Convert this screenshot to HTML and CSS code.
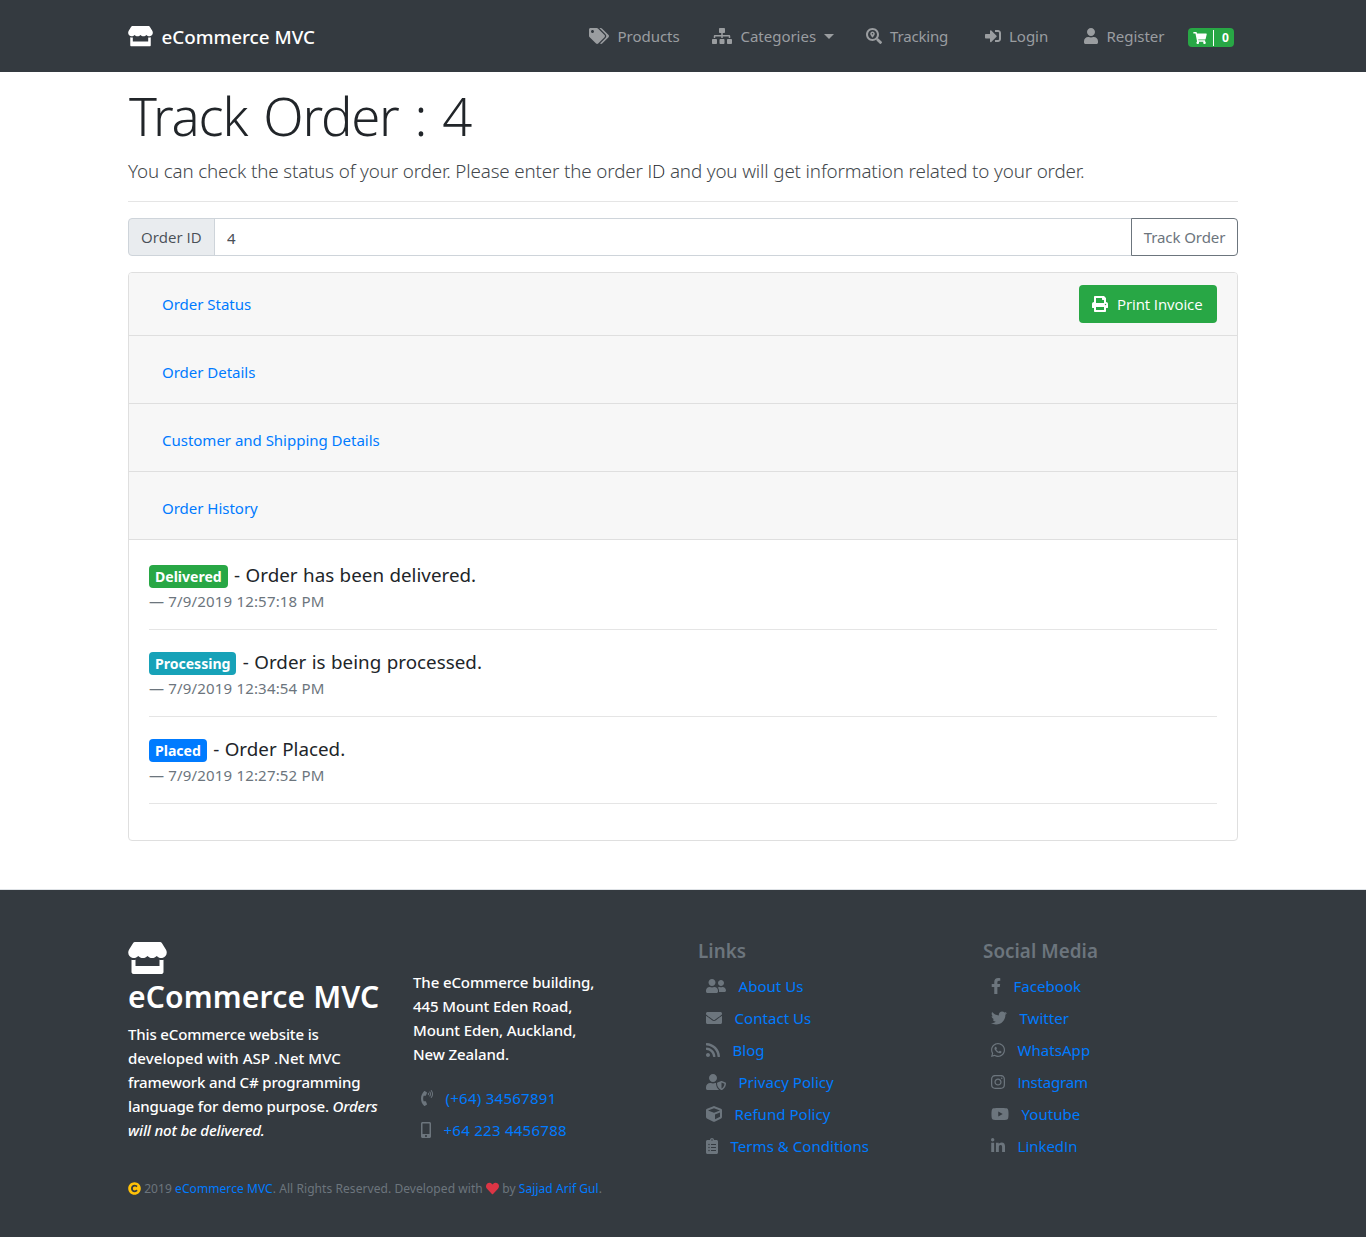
FILE: index.html
```html
<!DOCTYPE html>
<html lang="en">
<head>
<meta charset="utf-8">
<title>Track Order - eCommerce MVC</title>
<link rel="stylesheet" href="styles.css">
</head>
<body>
<svg class="sprite" aria-hidden="true">
  <symbol id="store" viewBox="0 0 616 512"><path d="M602 118.6L537.1 15C531.3 5.7 521 0 510 0H106C95 0 84.7 5.7 78.9 15L14 118.6c-33.5 53.5-3.8 127.9 58.8 136.4 4.5.6 9.1.9 13.7.9 29.6 0 55.8-13 73.8-33.1 18 20.1 44.3 33.1 73.8 33.1 29.6 0 55.8-13 73.8-33.1 18 20.1 44.3 33.1 73.8 33.1 29.6 0 55.8-13 73.8-33.1 18.1 20.1 44.3 33.1 73.8 33.1 4.7 0 9.2-.3 13.7-.9 62.8-8.4 92.6-82.8 59-136.4zM529.5 288c-10 0-19.9-1.5-29.5-3.8V384H116v-99.8c-9.6 2.2-19.5 3.8-29.5 3.8-6 0-12.1-.4-18-1.2-5.6-.8-11.1-2.1-16.4-3.6V480c0 17.7 14.3 32 32 32h448c17.7 0 32-14.3 32-32V283.2c-5.4 1.6-10.8 2.9-16.4 3.6-6.1.8-12.1 1.2-18.2 1.2z"/></symbol>
  <symbol id="tags" viewBox="0 0 640 512"><path d="M497.941 225.941L286.059 14.059A48 48 0 0 0 252.118 0H48C21.49 0 0 21.49 0 48v204.118a48 48 0 0 0 14.059 33.941l211.882 211.882c18.744 18.745 49.136 18.746 67.882 0l204.118-204.118c18.745-18.745 18.745-49.137 0-67.882zM112 160c-26.51 0-48-21.49-48-48s21.49-48 48-48 48 21.49 48 48-21.49 48-48 48zm513.941 133.823L421.823 497.941c-18.745 18.745-49.137 18.745-67.882 0l-.36-.36L527.64 323.522c16.999-16.999 26.36-39.6 26.36-63.64s-9.362-46.641-26.36-63.64L331.397 0h48.721a48 48 0 0 1 33.941 14.059l211.882 211.882c18.745 18.745 18.745 49.137 0 67.882z"/></symbol>
  <symbol id="sitemap" viewBox="0 0 640 512"><path d="M128 352H32c-17.67 0-32 14.33-32 32v96c0 17.67 14.33 32 32 32h96c17.67 0 32-14.33 32-32v-96c0-17.67-14.33-32-32-32zm-24-80h192v48h48v-48h192v48h48v-57.59c0-21.17-17.23-38.41-38.41-38.41H344v-64h40c17.67 0 32-14.33 32-32V32c0-17.67-14.33-32-32-32H256c-17.67 0-32 14.33-32 32v96c0 17.67 14.33 32 32 32h40v64H94.41C73.23 224 56 241.23 56 262.41V320h48v-48zm264 80h-96c-17.67 0-32 14.33-32 32v96c0 17.67 14.33 32 32 32h96c17.67 0 32-14.33 32-32v-96c0-17.67-14.33-32-32-32zm240 0h-96c-17.67 0-32 14.33-32 32v96c0 17.67 14.33 32 32 32h96c17.67 0 32-14.33 32-32v-96c0-17.67-14.33-32-32-32z"/></symbol>
  <symbol id="search-location" viewBox="0 0 512 512"><path d="M505.04 442.66l-99.71-99.69c-4.5-4.5-10.6-7-17-7h-16.3c27.6-35.3 44-79.69 44-127.99C416.03 93.09 322.92 0 208.02 0S0 93.09 0 207.98s93.11 207.98 208.02 207.98c48.3 0 92.71-16.4 128.01-44v16.3c0 6.4 2.5 12.5 7 17l99.71 99.69c9.4 9.4 24.6 9.4 33.9 0l28.3-28.3c9.4-9.4 9.4-24.59.1-33.99zm-297.02-90.7c-79.54 0-144-64.34-144-143.98 0-79.53 64.35-143.98 144-143.98 79.54 0 144 64.34 144 143.98 0 79.53-64.35 143.98-144 143.98zm.02-239.96c-40.78 0-73.84 33.05-73.84 73.83 0 32.96 48.26 93.05 66.75 114.86a9.24 9.24 0 0 0 14.18 0c18.49-21.81 66.75-81.89 66.75-114.86 0-40.78-33.06-73.83-73.84-73.83zm0 96c-13.26 0-24-10.75-24-24 0-13.26 10.75-24 24-24s24 10.74 24 24c0 13.25-10.75 24-24 24z"/></symbol>
  <symbol id="sign-in" viewBox="0 0 512 512"><path d="M416 448h-84c-6.6 0-12-5.4-12-12v-40c0-6.6 5.4-12 12-12h84c17.7 0 32-14.3 32-32V160c0-17.7-14.3-32-32-32h-84c-6.6 0-12-5.4-12-12V76c0-6.6 5.4-12 12-12h84c53 0 96 43 96 96v192c0 53-43 96-96 96zm-47-201L201 79c-15-15-41-4.5-41 17v96H24c-13.3 0-24 10.7-24 24v96c0 13.3 10.7 24 24 24h136v96c0 21.5 26 32 41 17l168-168c9.3-9.4 9.3-24.6 0-34z"/></symbol>
  <symbol id="user" viewBox="0 0 448 512"><path d="M224 256c70.7 0 128-57.3 128-128S294.7 0 224 0 96 57.3 96 128s57.3 128 128 128zm89.6 32h-16.7c-22.2 10.2-46.9 16-72.9 16s-50.6-5.8-72.9-16h-16.7C60.2 288 0 348.2 0 422.4V464c0 26.5 21.5 48 48 48h352c26.5 0 48-21.5 48-48v-41.6c0-74.2-60.2-134.4-134.4-134.4z"/></symbol>
  <symbol id="cart" viewBox="0 0 576 512"><path d="M528.12 301.319l47.273-208C578.806 78.301 567.391 64 551.99 64H159.208l-9.166-44.81C147.758 8.021 137.93 0 126.529 0H24C10.745 0 0 10.745 0 24v16c0 13.255 10.745 24 24 24h69.883l70.248 343.435C147.325 417.1 136 435.222 136 456c0 30.928 25.072 56 56 56s56-25.072 56-56c0-15.674-6.447-29.835-16.824-40h209.647C430.447 426.165 424 440.326 424 456c0 30.928 25.072 56 56 56s56-25.072 56-56c0-22.172-12.888-41.332-31.579-50.405l5.517-24.276c3.413-15.018-8.002-29.319-23.403-29.319H218.117l-6.545-32h293.145c11.206 0 20.92-7.754 23.403-18.681z"/></symbol>
  <symbol id="print" viewBox="0 0 512 512"><path d="M448 192V77.25c0-8.49-3.37-16.62-9.37-22.63L393.37 9.37c-6-6-14.14-9.37-22.63-9.37H96C78.33 0 64 14.33 64 32v160c-35.35 0-64 28.65-64 64v112c0 8.84 7.16 16 16 16h48v96c0 17.67 14.33 32 32 32h320c17.67 0 32-14.33 32-32v-96h48c8.84 0 16-7.16 16-16V256c0-35.35-28.65-64-64-64zm-64 256H128v-96h256v96zm0-224H128V64h192v48c0 8.84 7.16 16 16 16h48v96zm48 72c-13.25 0-24-10.75-24-24 0-13.26 10.75-24 24-24s24 10.74 24 24c0 13.25-10.75 24-24 24z"/></symbol>
  <symbol id="copyright" viewBox="0 0 512 512"><path d="M256 8C119.033 8 8 119.033 8 256s111.033 248 248 248 248-111.033 248-248S392.967 8 256 8zm117.134 346.753c-1.592 1.867-39.776 45.731-109.851 45.731-84.692 0-144.484-63.26-144.484-145.567 0-81.303 62.004-143.401 143.762-143.401 66.957 0 101.965 37.315 103.422 38.904a12 12 0 0 1 1.238 14.623l-22.38 34.655c-4.049 6.267-12.774 7.351-18.234 2.295-.233-.214-26.529-23.88-61.88-23.88-46.116 0-73.916 33.575-73.916 76.082 0 39.602 25.514 79.692 74.277 79.692 38.697 0 65.28-28.338 65.544-28.625 5.132-5.565 14.059-5.033 18.508 1.053l24.547 33.572a12.001 12.001 0 0 1-.553 14.866z"/></symbol>
  <symbol id="heart" viewBox="0 0 512 512"><path d="M462.3 62.6C407.5 15.9 326 24.3 275.7 76.2L256 96.5l-19.7-20.3C186.1 24.3 104.5 15.9 49.7 62.6c-62.8 53.6-66.1 149.8-9.9 207.9l193.5 199.8c12.5 12.9 32.8 12.9 45.3 0l193.5-199.8c56.3-58.1 53-154.3-9.8-207.9z"/></symbol>
  <symbol id="phone" viewBox="0 0 384 512"><path d="M97.333 506.966c-129.874-129.874-129.681-340.252 0-469.933 5.698-5.698 14.527-6.632 21.263-2.422l64.817 40.513a17.187 17.187 0 0 1 6.849 20.958l-32.408 81.021a17.188 17.188 0 0 1-17.669 10.719l-55.81-5.58c-21.051 58.261-20.612 122.471 0 179.515l55.811-5.581a17.188 17.188 0 0 1 17.669 10.719l32.408 81.022a17.188 17.188 0 0 1-6.849 20.958l-64.817 40.513a17.19 17.19 0 0 1-21.265-2.422zM247.126 95.473c11.832 20.047 11.832 45.008 0 65.055-3.95 6.693-13.108 7.959-18.718 2.581l-5.975-5.726c-3.911-3.748-4.793-9.622-2.261-14.41a32.063 32.063 0 0 0 0-29.945c-2.533-4.788-1.65-10.662 2.261-14.41l5.975-5.726c5.61-5.378 14.768-4.112 18.718 2.581zm91.787-91.187c60.14 71.604 60.092 175.882 0 247.428-4.474 5.327-12.53 5.746-17.552.933l-5.798-5.557c-4.56-4.371-4.977-11.529-.93-16.379 49.687-59.538 49.646-145.933 0-205.422-4.047-4.85-3.631-12.008.93-16.379l5.798-5.557c5.022-4.813 13.078-4.394 17.552.933zm-45.972 44.941c36.05 46.322 36.108 111.149 0 157.546-4.39 5.641-12.697 6.251-17.856 1.304l-5.818-5.579c-4.4-4.219-4.998-11.095-1.285-15.931 26.536-34.564 26.534-82.572 0-117.134-3.713-4.836-3.115-11.711 1.285-15.931l5.818-5.579c5.159-4.947 13.466-4.337 17.856 1.304z"/></symbol>
  <symbol id="mobile" viewBox="0 0 320 512"><path d="M272 0H48C21.5 0 0 21.5 0 48v416c0 26.5 21.5 48 48 48h224c26.5 0 48-21.5 48-48V48c0-26.5-21.5-48-48-48zM160 480c-17.7 0-32-14.3-32-32s14.3-32 32-32 32 14.3 32 32-14.3 32-32 32zm112-108c0 6.6-5.4 12-12 12H60c-6.6 0-12-5.4-12-12V60c0-6.6 5.4-12 12-12h200c6.6 0 12 5.4 12 12v312z"/></symbol>
  <symbol id="users" viewBox="0 0 640 512"><path d="M192 256c61.9 0 112-50.1 112-112S253.9 32 192 32 80 82.1 80 144s50.1 112 112 112zm76.8 32h-8.3c-20.8 10-43.9 16-68.5 16s-47.6-6-68.5-16h-8.3C51.6 288 0 339.6 0 403.2V432c0 26.5 21.5 48 48 48h288c26.5 0 48-21.5 48-48v-28.8c0-63.6-51.6-115.2-115.2-115.2zM480 256c53 0 96-43 96-96s-43-96-96-96-96 43-96 96 43 96 96 96zm48 32h-3.8c-13.9 4.8-28.6 8-44.2 8s-30.3-3.2-44.2-8H432c-20.4 0-39.2 5.9-55.7 15.4 24.4 26.3 39.7 61.2 39.7 99.8v38.4c0 2.2-.5 4.3-.6 6.4H592c26.5 0 48-21.5 48-48 0-61.9-50.1-112-112-112z"/></symbol>
  <symbol id="envelope" viewBox="0 0 512 512"><path d="M502.3 190.8c3.9-3.1 9.7-.2 9.7 4.7V400c0 26.5-21.5 48-48 48H48c-26.5 0-48-21.5-48-48V195.6c0-5 5.7-7.8 9.7-4.7 22.4 17.4 52.1 39.5 154.1 113.6 21.1 15.4 56.7 47.8 92.2 47.6 35.7.3 72-32.8 92.3-47.6 102-74.1 131.6-96.3 154-113.7zM256 320c23.2.4 56.6-29.2 73.4-41.4 132.7-96.3 142.8-104.7 173.4-128.7 5.8-4.5 9.2-11.5 9.2-18.9v-19c0-26.5-21.5-48-48-48H48c-26.5 0-48 21.5-48 48v19c0 7.4 3.4 14.3 9.2 18.9 30.6 23.9 40.7 32.4 173.4 128.7 16.8 12.2 50.2 41.8 73.4 41.4z"/></symbol>
  <symbol id="rss" viewBox="0 0 448 512"><path d="M128.081 415.959c0 35.369-28.672 64.041-64.041 64.041S0 451.328 0 415.959s28.672-64.041 64.041-64.041 64.04 28.673 64.04 64.041zm175.66 47.25c-8.354-154.6-132.185-278.587-286.95-286.95C7.656 175.765 0 183.105 0 192.253v48.069c0 8.415 6.49 15.472 14.887 16.018 111.832 7.284 201.473 96.702 208.772 208.772.547 8.397 7.604 14.887 16.018 14.887h48.069c9.149.001 16.489-7.655 15.995-16.79zm144.249.288C439.596 229.677 251.465 40.445 16.503 32.01 7.473 31.686 0 38.981 0 48.016v48.068c0 8.625 6.835 15.645 15.453 15.999 191.179 7.839 344.627 161.316 352.465 352.465.353 8.618 7.373 15.453 15.999 15.453h48.068c9.034-.001 16.329-7.474 16.005-16.504z"/></symbol>
  <symbol id="user-shield" viewBox="0 0 640 512"><path d="M622.3 271.1l-115.2-45c-4.1-1.6-12.6-3.7-22.2 0l-115.2 45c-10.7 4.2-17.7 14-17.7 24.9 0 111.6 68.7 188.8 132.9 213.9 9.6 3.7 18 1.6 22.2 0C558.4 489.9 640 420.5 640 296c0-10.9-7-20.7-17.7-24.9zM496 462.4V273.3l95.5 37.3c-5.6 87.1-60.9 135.4-95.5 151.8zM224 256c70.7 0 128-57.3 128-128S294.7 0 224 0 96 57.3 96 128s57.3 128 128 128zm96 40c0-2.5.8-4.8 1.1-7.2-2.5-.1-4.9-.8-7.5-.8h-16.7c-22.2 10.2-46.9 16-72.9 16s-50.6-5.8-72.9-16h-16.7C60.2 288 0 348.2 0 422.4V464c0 26.5 21.5 48 48 48h352c6.8 0 13.3-1.5 19.2-4-54-42.9-99.2-116.7-99.2-212z"/></symbol>
  <symbol id="cube" viewBox="0 0 512 512"><path d="M239.1 6.3l-208 78c-18.7 7-31.1 25-31.1 45v225.1c0 18.2 10.3 34.8 26.5 42.9l208 104c13.5 6.8 29.4 6.8 42.9 0l208-104c16.3-8.1 26.5-24.8 26.5-42.9V129.3c0-20-12.4-37.9-31.1-44.9l-208-78C262 2.2 250 2.2 239.1 6.3zM256 68.4l192 72v1.1l-192 78-192-78v-1.1l192-72zm32 356V275.5l160-65v133.9l-160 80z"/></symbol>
  <symbol id="clipboard" viewBox="0 0 384 512"><path d="M336 64h-80c0-35.3-28.7-64-64-64s-64 28.7-64 64H48C21.5 64 0 85.5 0 112v352c0 26.5 21.5 48 48 48h288c26.5 0 48-21.5 48-48V112c0-26.5-21.5-48-48-48zM96 424c-13.3 0-24-10.7-24-24s10.7-24 24-24 24 10.7 24 24-10.7 24-24 24zm0-96c-13.3 0-24-10.7-24-24s10.7-24 24-24 24 10.7 24 24-10.7 24-24 24zm0-96c-13.3 0-24-10.7-24-24s10.7-24 24-24 24 10.7 24 24-10.7 24-24 24zm96-192c13.3 0 24 10.7 24 24s-10.7 24-24 24-24-10.7-24-24 10.7-24 24-24zm128 368c0 4.4-3.6 8-8 8H168c-4.4 0-8-3.6-8-8v-16c0-4.4 3.6-8 8-8h144c4.4 0 8 3.6 8 8v16zm0-96c0 4.4-3.6 8-8 8H168c-4.4 0-8-3.6-8-8v-16c0-4.4 3.6-8 8-8h144c4.4 0 8 3.6 8 8v16zm0-96c0 4.4-3.6 8-8 8H168c-4.4 0-8-3.6-8-8v-16c0-4.4 3.6-8 8-8h144c4.4 0 8 3.6 8 8v16z"/></symbol>
  <symbol id="facebook" viewBox="0 0 320 512"><path d="M279.14 288l14.22-92.66h-88.91v-60.13c0-25.35 12.42-50.06 52.24-50.06h40.42V6.26S260.43 0 225.36 0c-73.22 0-121.08 44.38-121.08 124.72v70.62H22.89V288h81.39v224h100.17V288z"/></symbol>
  <symbol id="twitter" viewBox="0 0 512 512"><path d="M459.37 151.716c.325 4.548.325 9.097.325 13.645 0 138.72-105.583 298.558-298.558 298.558-59.452 0-114.68-17.219-161.137-47.106 8.447.974 16.568 1.299 25.34 1.299 49.055 0 94.213-16.568 130.274-44.832-46.132-.975-84.792-31.188-98.112-72.772 6.498.974 12.995 1.624 19.818 1.624 9.421 0 18.843-1.3 27.614-3.573-48.081-9.747-84.143-51.98-84.143-102.985v-1.299c13.969 7.797 30.214 12.67 47.431 13.319-28.264-18.843-46.781-51.005-46.781-87.391 0-19.492 5.197-37.36 14.294-52.954 51.655 63.675 129.3 105.258 216.365 109.807-1.624-7.797-2.599-15.918-2.599-24.04 0-57.828 46.782-104.934 104.934-104.934 30.213 0 57.502 12.67 76.67 33.137 23.715-4.548 46.456-13.32 66.599-25.34-7.798 24.366-24.366 44.833-46.132 57.827 21.117-2.273 41.584-8.122 60.426-16.243-14.292 20.791-32.161 39.308-52.628 54.253z"/></symbol>
  <symbol id="whatsapp" viewBox="0 0 448 512"><path d="M380.9 97.1C339 55.1 283.2 32 223.9 32c-122.4 0-222 99.6-222 222 0 39.1 10.2 77.3 29.6 111L0 480l117.7-30.9c32.4 17.7 68.9 27 106.1 27h.1c122.3 0 224.1-99.6 224.1-222 0-59.3-25.2-115-67.1-157zm-157 341.6c-33.2 0-65.7-8.9-94-25.7l-6.7-4-69.8 18.3L72 359.2l-4.4-7c-18.5-29.4-28.2-63.3-28.2-98.2 0-101.7 82.8-184.5 184.6-184.5 49.3 0 95.6 19.2 130.4 54.1 34.8 34.9 56.2 81.2 56.1 130.5 0 101.8-84.9 184.6-186.6 184.6zm101.2-138.2c-5.5-2.8-32.8-16.2-37.9-18-5.1-1.9-8.8-2.8-12.5 2.8-3.7 5.6-14.3 18-17.6 21.8-3.2 3.7-6.5 4.2-12 1.4-32.6-16.3-54-29.1-75.5-66-5.7-9.8 5.7-9.1 16.3-30.3 1.8-3.7.9-6.9-.5-9.7-1.4-2.8-12.5-30.1-17.1-41.2-4.5-10.8-9.1-9.3-12.5-9.5-3.2-.2-6.9-.2-10.6-.2-3.7 0-9.7 1.4-14.8 6.9-5.1 5.6-19.4 19-19.4 46.3 0 27.3 19.9 53.7 22.6 57.4 2.8 3.7 39.1 59.7 94.8 83.8 35.2 15.2 49 16.5 66.6 13.9 10.7-1.6 32.8-13.4 37.4-26.4 4.6-13 4.6-24.1 3.2-26.4-1.3-2.5-5-3.9-10.5-6.6z"/></symbol>
  <symbol id="instagram" viewBox="0 0 448 512"><path d="M224.1 141c-63.6 0-114.9 51.3-114.9 114.9s51.3 114.9 114.9 114.9S339 319.5 339 255.9 287.7 141 224.1 141zm0 189.6c-41.1 0-74.7-33.5-74.7-74.7s33.5-74.7 74.7-74.7 74.7 33.5 74.7 74.7-33.6 74.7-74.7 74.7zm146.4-194.3c0 14.9-12 26.8-26.8 26.8-14.9 0-26.8-12-26.8-26.8s12-26.8 26.8-26.8 26.8 12 26.8 26.8zm76.1 27.2c-1.7-35.9-9.9-67.7-36.2-93.9-26.2-26.2-58-34.4-93.9-36.2-37-2.1-147.9-2.1-184.9 0-35.8 1.7-67.6 9.9-93.9 36.1s-34.4 58-36.2 93.9c-2.1 37-2.1 147.9 0 184.9 1.7 35.9 9.9 67.7 36.2 93.9s58 34.4 93.9 36.2c37 2.1 147.9 2.1 184.9 0 35.9-1.7 67.7-9.9 93.9-36.2 26.2-26.2 34.4-58 36.2-93.9 2.1-37 2.1-147.8 0-184.8zM398.8 388c-7.8 19.6-22.9 34.7-42.6 42.6-29.5 11.7-99.5 9-132.1 9s-102.7 2.6-132.1-9c-19.6-7.8-34.7-22.9-42.6-42.6-11.7-29.5-9-99.5-9-132.1s-2.6-102.7 9-132.1c7.8-19.6 22.9-34.7 42.6-42.6 29.5-11.7 99.5-9 132.1-9s102.7-2.6 132.1 9c19.6 7.8 34.7 22.9 42.6 42.6 11.7 29.5 9 99.5 9 132.1s2.7 102.7-9 132.1z"/></symbol>
  <symbol id="youtube" viewBox="0 0 576 512"><path d="M549.655 124.083c-6.281-23.65-24.787-42.276-48.284-48.597C458.781 64 288 64 288 64S117.22 64 74.629 75.486c-23.497 6.322-42.003 24.947-48.284 48.597-11.412 42.867-11.412 132.305-11.412 132.305s0 89.438 11.412 132.305c6.281 23.65 24.787 41.5 48.284 47.821C117.22 448 288 448 288 448s170.78 0 213.371-11.486c23.497-6.321 42.003-24.171 48.284-47.821 11.412-42.867 11.412-132.305 11.412-132.305s0-89.438-11.412-132.305zm-317.51 213.508V175.185l142.739 81.205-142.739 81.201z"/></symbol>
  <symbol id="linkedin" viewBox="0 0 448 512"><path d="M100.28 448H7.4V148.9h92.88zM53.79 108.1C24.09 108.1 0 83.5 0 53.8a53.79 53.79 0 0 1 107.58 0c0 29.7-24.1 54.3-53.79 54.3zM447.9 448h-92.68V302.4c0-34.7-.7-79.2-48.29-79.2-48.29 0-55.69 37.7-55.69 76.7V448h-92.78V148.9h89.08v40.8h1.3c12.4-23.5 42.69-48.3 88.5-48.3 94.28 0 111.28 62.1 111.28 142.3V448z"/></symbol>
</svg>

<header class="topbar">
  <div class="container topbar-inner">
    <a class="brand"><svg class="icon brand-icon"><use href="#store"/></svg>eCommerce MVC</a>
    <nav class="menu">
      <a class="menu-link"><svg class="icon w20"><use href="#tags"/></svg>Products</a>
      <a class="menu-link"><svg class="icon w20"><use href="#sitemap"/></svg>Categories<i class="caret"></i></a>
      <a class="menu-link tracking"><svg class="icon w16"><use href="#search-location"/></svg>Tracking</a>
      <a class="menu-link"><svg class="icon w16"><use href="#sign-in"/></svg>Login</a>
      <a class="menu-link"><svg class="icon w14"><use href="#user"/></svg>Register</a>
      <a class="cart"><svg class="icon"><use href="#cart"/></svg><i class="cart-bar"></i>0</a>
    </nav>
  </div>
</header>

<main class="container main">
  <h1 class="title">Track Order : 4</h1>
  <p class="lead">You can check the status of your order. Please enter the order <span class="plain-i lead-id">ID</span> and you will get information related to your order.</p>
  <hr class="rule">
  <form class="search">
    <label class="search-label plain-i" for="order-id">Order ID</label>
    <input class="search-input" id="order-id" value="4">
    <button class="search-button" type="button">Track Order</button>
  </form>
  <section class="card">
    <div class="card-head first"><a>Order Status</a>
      <button class="print plain-i" type="button"><svg class="icon w16"><use href="#print"/></svg>Print Invoice</button></div>
    <div class="card-head"><a>Order Details</a></div>
    <div class="card-head"><a>Customer and Shipping Details</a></div>
    <div class="card-head"><a>Order History</a></div>
    <div class="card-body">
      <blockquote class="event">
        <p class="event-text"><span class="badge green">Delivered</span> - Order has been delivered.</p>
        <footer class="event-time">— 7/9/2019 12:57:18 PM</footer>
      </blockquote>
      <blockquote class="event">
        <p class="event-text"><span class="badge teal">Processing</span> - Order is being processed.</p>
        <footer class="event-time">— 7/9/2019 12:34:54 PM</footer>
      </blockquote>
      <blockquote class="event">
        <p class="event-text"><span class="badge blue">Placed</span> - Order Placed.</p>
        <footer class="event-time">— 7/9/2019 12:27:52 PM</footer>
      </blockquote>
    </div>
  </section>
</main>

<footer class="site-footer">
  <div class="container">
    <div class="columns">
      <div class="about">
        <svg class="icon about-icon"><use href="#store"/></svg>
        <h2 class="about-title">eCommerce MVC</h2>
        <p class="about-text">This eCommerce website is<br><span class="wide">developed with ASP .Net MVC</span><br>framework and C# programming<br>language for demo purpose. <em>Orders<br>will not be delivered.</em></p>
      </div>
      <div class="contact">
        <address class="address">The eCommerce building,<br>445 Mount Eden Road,<br>Mount Eden, Auckland,<br>New Zealand.</address>
        <a class="link digits"><svg class="icon w12"><use href="#phone"/></svg>(+64) 34567891</a>
        <a class="link digits"><svg class="icon w10"><use href="#mobile"/></svg>+64 223 4456788</a>
      </div>
      <div class="list">
        <h5 class="list-title">Links</h5>
        <a class="link"><svg class="icon w20"><use href="#users"/></svg>About Us</a>
        <a class="link"><svg class="icon w16"><use href="#envelope"/></svg>Contact Us</a>
        <a class="link"><svg class="icon w14"><use href="#rss"/></svg>Blog</a>
        <a class="link"><svg class="icon w20"><use href="#user-shield"/></svg>Privacy Policy</a>
        <a class="link"><svg class="icon w16"><use href="#cube"/></svg>Refund Policy</a>
        <a class="link"><svg class="icon w12"><use href="#clipboard"/></svg>Terms &amp; Conditions</a>
      </div>
      <div class="list">
        <h5 class="list-title">Social Media</h5>
        <a class="link"><svg class="icon w10"><use href="#facebook"/></svg>Facebook</a>
        <a class="link"><svg class="icon w16"><use href="#twitter"/></svg>Twitter</a>
        <a class="link"><svg class="icon w14"><use href="#whatsapp"/></svg>WhatsApp</a>
        <a class="link tight"><svg class="icon w14"><use href="#instagram"/></svg><span><span class="plain-i">I</span>nstagram</span></a>
        <a class="link"><svg class="icon w18"><use href="#youtube"/></svg>Youtube</a>
        <a class="link"><svg class="icon w14"><use href="#linkedin"/></svg><span class="plain-i">LinkedIn</span></a>
      </div>
    </div>
    <p class="legal"><svg class="icon legal-icon yellow"><use href="#copyright"/></svg> 2019 <a>eCommerce MVC</a>. All Rights Reserved. Developed with <svg class="icon legal-icon red"><use href="#heart"/></svg> by <a>Sajjad Arif Gul</a>.</p>
  </div>
</footer>
</body>
</html>
```
FILE: styles.css
```css
*, *::before, *::after { box-sizing: border-box; }

body {
  margin: 0;
  font: 400 15.04px/24px "Noto Sans", "Open Sans", sans-serif;
  color: #212529;
  background: #fff;
}

h1, h2, h5, p, blockquote { margin: 0; }
.sprite { display: none; }
.icon { fill: currentColor; height: 16px; flex: none; }
.w10 { width: 10px; }
.w12 { width: 12px; }
.w14 { width: 14px; }
.w16 { width: 16px; }
.w18 { width: 18px; }
.w20 { width: 20px; }
.container { width: 1110px; margin: 0 auto; }
.plain-i { font-family: "Open Sans", sans-serif; }

/* Top bar */
.topbar { background: #343a40; height: 72px; }
.topbar-inner { display: flex; align-items: center; justify-content: space-between; height: 100%; padding-right: 4px; }
.brand { display: flex; align-items: center; gap: 8.5px; color: #fff; font-size: 18.8px; font-weight: 500; letter-spacing: 0; line-height: 30px; padding-top: 1px; }
.brand-icon { width: 25px; height: 20.5px; }
.menu { display: grid; grid-template-columns: 123px 153.5px 119px 99.5px 104px 46px; align-items: center; }
.menu-link { display: flex; align-items: center; gap: 8.5px; color: #9a9da0; letter-spacing: -.04px; }
.tracking { letter-spacing: -.18px; }
.caret { width: 0; height: 0; border: 5px solid transparent; border-top-color: currentColor; border-bottom: 0; margin-left: -1px; }
.cart { display: flex; align-items: center; height: 19px; margin-top: 3px; padding: 0 5px; border-radius: 4px; background: #28a745; color: #fff; font-size: 12px; font-weight: 700; line-height: 19px; }
.cart .icon { width: 14px; height: 12px; }
.cart-bar { width: 1px; height: 16px; background: #fff; margin: 0 8px 0 6px; }

/* Order tracking */
.main { padding-top: 10px; height: 817px; }
.title { padding-left: 1px; font-size: 52.64px; font-weight: 300; line-height: 67.2px; letter-spacing: -1.2px; word-spacing: 3.5px; margin-bottom: 7px; }
.lead { color: #43484c; font-size: 18.8px; font-weight: 300; line-height: 30px; letter-spacing: -.142px; white-space: nowrap; }
.lead-id { color: #212529; }
.rule { height: 1px; border: 0; background: #e5e5e5; margin: 15px 0 16px; }
.search { display: flex; height: 38px; margin-bottom: 16px; }
.search-label { width: 87px; padding: 0 12px; border: 1px solid #ced4da; border-radius: 4px 0 0 4px; background: #e9ecef; color: #495057; line-height: 36px; }
.search-input { flex: 1; min-width: 0; margin-left: -1px; padding: 2px 12px 0; border: 1px solid #ced4da; font: inherit; color: #495057; }
.search-button { width: 107px; margin-left: -1px; padding: 0; border: 1px solid #6c757d; border-radius: 0 4px 4px 0; background: #fff; color: #6c757d; font: inherit; letter-spacing: -.107px; }

.card { border: 1px solid #dfdfdf; border-radius: 4px; height: 569px; overflow: hidden; }
.card-head { display: flex; align-items: center; justify-content: space-between; height: 68px; padding: 5px 20px 0 33px; background: #f7f7f7; border-bottom: 1px solid #dfdfdf; color: #007bff; letter-spacing: -.03px; }
.card-head.first { height: 63px; padding-top: 0; }
.print { display: flex; align-items: center; gap: 9px; width: 138px; height: 38px; padding: 0 0 0 13px; border: 0; border-radius: 4px; background: #28a745; color: #fff; font-size: 15.04px; font-weight: 500; letter-spacing: -.1px; }
.card-body { padding: 20px; }
.event { height: 70px; border-bottom: 1px solid #e5e5e5; margin-bottom: 17px; }
.event-text { font-size: 18.8px; line-height: 30px; height: 29px; letter-spacing: .02px; word-spacing: .5px; }
.event-time { color: #6c757d; letter-spacing: .163px; }
.badge { display: inline-block; height: 23px; margin-right: 1px; padding: 0 6px; border-radius: 4px; color: #fff; font-size: 14.1px; font-weight: 700; line-height: 23px; letter-spacing: -.03px; }
.green { background: #28a745; }
.teal { background: #17a2b8; }
.blue { background: #007bff; }

/* Footer */
.site-footer { height: 348px; padding-top: 49px; border-top: 1px solid #dee2e6; background: #343a40; color: #fff; }
.columns { display: grid; grid-template-columns: repeat(4, 285px); height: 238px; }
.about-icon { display: block; width: 39px; height: 32px; margin-top: 3px; }
.about-title { font-size: 30.08px; font-weight: 600; line-height: 38.4px; letter-spacing: .15px; margin: 4px 0 6px; }
.about-text { font-weight: 500; letter-spacing: -.16px; white-space: nowrap; }
.wide { letter-spacing: .05px; }
.contact { padding-top: 31px; }
.address { font-style: normal; font-weight: 500; letter-spacing: -.12px; margin-bottom: 16px; }
.list-title { color: #6c757d; font-size: 18.8px; font-weight: 600; line-height: 24px; letter-spacing: .05px; margin-bottom: 7px; }
.link { display: flex; align-items: center; gap: 12.5px; height: 32px; padding-left: 8px; color: #007bff; letter-spacing: .03px; }
.link .icon { color: #6c757d; }
.digits { letter-spacing: .25px; }
.tight { letter-spacing: -.22px; }
.legal { color: #6c757d; font-size: 12.03px; line-height: 24px; letter-spacing: .06px; }
.legal a { color: #007bff; }
.legal-icon { width: 13px; height: 13px; vertical-align: -2px; }
.yellow { color: #ffc107; }
.red { color: #dc3545; }
```
